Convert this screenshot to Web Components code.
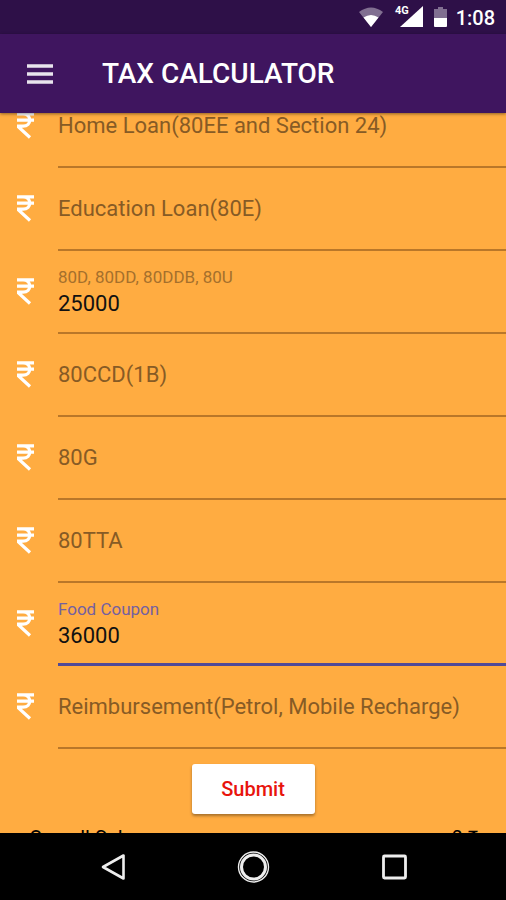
<!DOCTYPE html>
<html lang="en">
<head>
<meta charset="utf-8">
<meta name="viewport" content="width=device-width, initial-scale=1">
<title>Tax Calculator</title>
<style>
html, body { margin: 0; height: 100%; }
body { font-family: Roboto, "Liberation Sans", sans-serif; color: #000; background: #ffac41; }
</style>
</head>
<body>
<tax-app></tax-app>

<template id="status-bar">
<style>
:host { display: flex; align-items: center; justify-content: flex-end; height: 34px; padding-right: 11px; box-sizing: border-box; background: #2e1048; color: #fff; flex: none; }
svg { display: block; }
time { font-size: 20px; line-height: 24px; font-weight: 500; padding-top: 2px; margin-left: 8px; }
</style>
<svg width="90" height="34" viewBox="0 0 90 34" role="img" aria-label="Wi-Fi, 4G signal, battery">
<path d="M1 12Q13 3 25 12L13 27Z" fill="#fff" fill-opacity=".4"/>
<path d="M5.500 17.500Q13 12.500 20.500 17.500L13 27Z" fill="#fff"/>
<path d="M42 27H65V6Z" fill="#fff"/>
<text x="37" y="14" font-size="11" font-weight="700" fill="#fff" font-family="Roboto, sans-serif">4G</text>
<path d="M76 9H80V7H85V9H89V18H76Z" fill="#fff" fill-opacity=".4"/>
<path d="M76 18H89V26Q89 27 88 27H77Q76 27 76 26Z" fill="#fff"/>
</svg>
<time>1:08</time>
</template>

<template id="app-bar">
<style>
:host { display: flex; align-items: center; height: 79px; padding: 0 27px; gap: 49px; box-sizing: border-box; background: #3f155f; color: #fff; flex: none; position: relative; box-shadow: 0 1px 3px rgba(0,0,0,.45); }
button { display: block; border: 0; padding: 0; background: none; color: inherit; }
svg { display: block; }
h1 { margin: 0; font-size: 28px; line-height: 36px; font-weight: 500; white-space: nowrap; }
</style>
<button type="button" aria-label="Menu"><svg width="26" height="20" viewBox="0 0 26 20"><path d="M0 2H26M0 10H26M0 18H26" stroke="#e9e4ee" stroke-width="3.600"/></svg></button>
<h1><slot></slot></h1>
</template>

<template id="rupee-field">
<style>
:host { display: flex; height: 83px; padding-left: 17px; gap: 24px; }
svg { display: block; flex: none; margin-top: 27px; }
.box { flex: 1; min-width: 0; box-sizing: border-box; display: grid; grid-template: 18px 32px / 1fr; align-content: start; padding-top: 16px; border-bottom: 2px solid rgba(60,25,0,.36); }
label { color: #875b25; font-size: 22px; line-height: 30px; grid-area: 1 / 1 / 3 / 2; align-self: center; white-space: nowrap; pointer-events: none; }
input { grid-area: 2 / 1; min-width: 0; width: 100%; box-sizing: border-box; border: 0; padding: 0; margin: 0; outline: 0; background: none; font: 22px/32px Roboto, "Liberation Sans", sans-serif; color: #111; }
:host(:not([value])) input { grid-area: 1 / 1 / 3 / 2; }
:host([value]) .box { grid-template-rows: 20px 34px; }
:host([value]) label { grid-area: 1 / 1; font-size: 17px; line-height: 20px; color: #a5702c; }
:host([active]) label { color: #7460a0; }
:host([active]) .box { border-bottom: 3px solid #504a98; }
</style>
<svg width="17" height="27" viewBox="0 0 17 27" fill="none" stroke="#fff" stroke-width="3.200" aria-hidden="true"><path d="M0 1.900H17M0 8.200H17M0 1.900H6C15 1.900 15 14.200 6 14.200H1.500V15L13 25.500"/></svg>
<div class="box"><label for="amount"></label><input id="amount" type="text" inputmode="numeric"></div>
</template>

<template id="submit-row">
<style>
:host { display: flex; justify-content: center; padding-top: 15px; }
button { min-width: 123px; height: 50px; padding: 0 29px; border: 0; border-radius: 3px; background: #fff; color: #e8140c; font: 500 20px/24px Roboto, "Liberation Sans", sans-serif; box-shadow: 0 2px 3px rgba(0,0,0,.35); }
</style>
<button type="submit"><slot></slot></button>
</template>

<template id="total-row">
<style>
:host { display: flex; justify-content: space-between; padding: 12px 28px 0 29px; font-size: 20px; line-height: 24px; white-space: nowrap; }
</style>
<span><slot></slot></span><span><slot name="amount"></slot></span>
</template>

<template id="nav-bar">
<style>
:host { display: flex; align-items: center; justify-content: space-between; height: 67px; padding: 0 96px; box-sizing: border-box; background: #000; flex: none; position: relative; }
button { display: block; border: 0; padding: 0; background: none; }
svg { display: block; }
</style>
<button type="button" aria-label="Back"><svg width="34" height="34" viewBox="0 0 34 34" fill="none" stroke="#eee" stroke-width="2.600" stroke-linejoin="round"><path d="M27.500 5.500V28.500L7 17Z"/></svg></button>
<button type="button" aria-label="Home"><svg width="34" height="34" viewBox="0 0 34 34" fill="none" stroke="#eee"><circle cx="17.500" cy="17" r="15" stroke-width="1.400"/><circle cx="17.500" cy="17" r="12" stroke-width="3"/></svg></button>
<button type="button" aria-label="Recent apps"><svg width="34" height="34" viewBox="0 0 34 34" fill="none" stroke="#eee" stroke-width="2.800"><rect x="7.500" y="6" width="22" height="22" rx="1"/></svg></button>
</template>

<template id="tax-app">
<style>
:host { display: flex; flex-direction: column; height: 100vh; overflow: hidden; }
main { flex: 1; min-height: 0; overflow: hidden; background: #ffac41; }
form { margin-top: -28px; }
</style>
<status-bar></status-bar>
<app-bar>TAX CALCULATOR</app-bar>
<main>
<form onsubmit="return false">
<rupee-field label="Home Loan(80EE and Section 24)"></rupee-field>
<rupee-field label="Education Loan(80E)"></rupee-field>
<rupee-field label="80D, 80DD, 80DDB, 80U" value="25000"></rupee-field>
<rupee-field label="80CCD(1B)"></rupee-field>
<rupee-field label="80G"></rupee-field>
<rupee-field label="80TTA"></rupee-field>
<rupee-field label="Food Coupon" value="36000" active></rupee-field>
<rupee-field label="Reimbursement(Petrol, Mobile Recharge)"></rupee-field>
<submit-row>Submit</submit-row>
<total-row>Overall Salary<span slot="amount">0 ₹</span></total-row>
</form>
</main>
<nav-bar></nav-bar>
</template>

<script>
class TemplateElement extends HTMLElement {
  constructor() {
    super();
    const template = document.getElementById(this.localName);
    this.attachShadow({ mode: "open" }).append(template.content.cloneNode(true));
  }
}
class RupeeField extends TemplateElement {
  connectedCallback() {
    this.shadowRoot.querySelector("label").textContent = this.getAttribute("label");
    this.shadowRoot.querySelector("input").value = this.getAttribute("value") || "";
  }
}
customElements.define("rupee-field", RupeeField);
for (const name of ["status-bar", "app-bar", "submit-row", "total-row", "nav-bar", "tax-app"]) {
  customElements.define(name, class extends TemplateElement {});
}
</script>
</body>
</html>
